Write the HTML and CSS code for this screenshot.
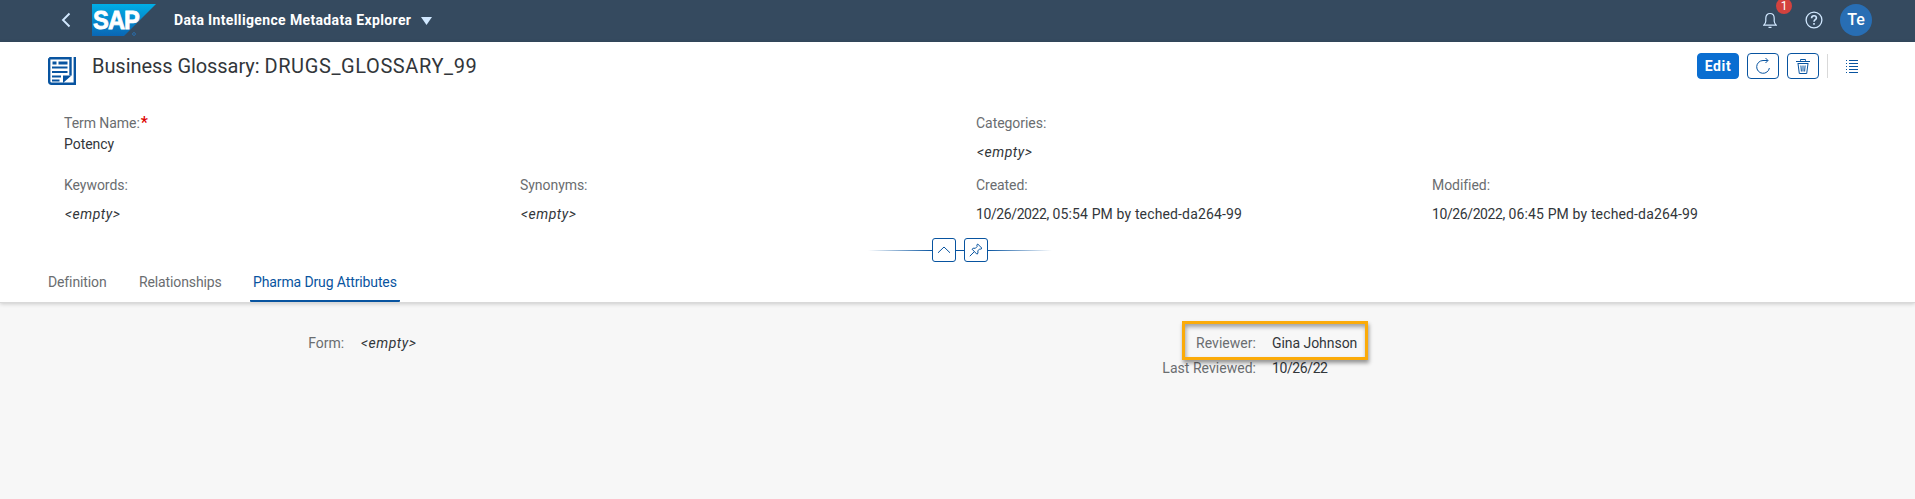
FILE: index.html
```html
<!DOCTYPE html>
<html lang="en">
<head>
<meta charset="utf-8">
<title>Data Intelligence Metadata Explorer</title>
<link rel="stylesheet" href="styles.css">
</head>
<body>
<header class="shell">
  <svg class="back" width="10" height="16" viewBox="0 0 10 16"><path d="M8.500 1.500 2 8l6.500 6.500"/></svg>
  <svg class="logo" width="64" height="32" viewBox="0 0 64 32">
    <defs><linearGradient id="sap" x1="0" y1="0" x2="0" y2="1"><stop offset="0" stop-color="#00aee6"/><stop offset="1" stop-color="#0a66b4"/></linearGradient></defs>
    <path fill="url(#sap)" d="M0 0h64L32 32H0z"/>
    <text class="logo-text" x="1" y="25" textLength="46" lengthAdjust="spacingAndGlyphs">SAP</text>
    <circle cx="42" cy="30" r="1.400" fill="none" stroke="#2b6ca8"/>
  </svg>
  <span class="app-name">Data Intelligence Metadata Explorer</span>
  <svg class="caret" width="11" height="8" viewBox="0 0 11 8"><path d="M0 0h11L5.500 8z"/></svg>
  <div class="shell-tools">
    <span class="bell">
      <svg width="14" height="17" viewBox="0 0 14 17"><path d="M.8 13.200h12.400c-1.400-1.300-2-2.200-2-4.200V6.200C11.200 3.300 9.500 1.500 7 1.500S2.800 3.300 2.800 6.200V9c0 2-.6 2.900-2 4.200zM5.500 15.300h3"/></svg>
      <span class="badge">1</span>
    </span>
    <svg class="help" width="18" height="18" viewBox="0 0 18 18"><circle cx="9" cy="9" r="7.900"/><path class="mark" d="M6.600 7.200C6.600 5.500 7.600 4.700 9 4.700s2.400.9 2.400 2.200C11.400 8.600 9 8.700 9 10.800M9 12.100v1.700"/></svg>
    <span class="avatar">Te</span>
  </div>
</header>

<section class="page-head">
  <div class="title-row">
    <svg class="doc" width="28" height="28" viewBox="0 0 28 28">
      <path class="line" d="M1.200 1.200H22.500V18.500M26.800 0V26.800H3.500Q1.200 26.800 1.200 24.500V1.200"/>
      <path class="fill" d="M4.500 4.500h4v3h-4zM10.500 4.500h9v3h-9zM4 9.500h15.500v2H4zM4 14h15.500v2H4zM4 18.500h9v2H4zM4 22.500h7.500v2H4zM15 26v-7.500H23.500z"/>
    </svg>
    <h1>Business Glossary: <span class="object-id">DRUGS_GLOSSARY_99</span></h1>
    <div class="actions">
      <button class="btn primary">Edit</button>
      <button class="btn"><svg width="16" height="16" viewBox="0 0 16 16"><path d="M12.800 2.500H8A6.400 6.400 0 1 0 14.400 10M10.500 0 13 2.500 10.500 5"/></svg></button>
      <button class="btn"><svg width="16" height="16" viewBox="0 0 16 16"><path d="M1 3.500h14M5.500 2.800V1.500h5v1.300M2.700 5.500h10.600M3 5.500l1.300 10h7.400l1.300-10M5.900 7.500l.5 6M8 7.500v6M10.100 7.500l-.5 6"/></svg></button>
      <span class="divider"></span>
      <svg class="list" width="14" height="14" viewBox="0 0 14 14"><path d="M4 1.500h9M4 4.500h9M4 7.500h9M4 10.500h9M4 13.500h9M1 1.500h1M1 4.500h1M1 7.500h1M1 10.500h1M1 13.500h1"/></svg>
    </div>
  </div>

  <div class="facts">
    <div class="fact tight wide"><span class="label">Term Name:<b class="req">*</b></span><span class="value">Potency</span></div>
    <div class="fact wide"><span class="label">Categories:</span><em class="value">&lt;empty&gt;</em></div>
    <div class="fact"><span class="label">Keywords:</span><em class="value">&lt;empty&gt;</em></div>
    <div class="fact"><span class="label">Synonyms:</span><em class="value">&lt;empty&gt;</em></div>
    <div class="fact"><span class="label">Created:</span><span class="value stamp"><span class="date">10/26/2022,</span> 05:54 PM by teched-da264-99</span></div>
    <div class="fact"><span class="label">Modified:</span><span class="value stamp"><span class="date">10/26/2022,</span> 06:45 PM by teched-da264-99</span></div>
  </div>

  <div class="snap">
    <span class="fade left"></span>
    <button class="mini"><svg width="14" height="14" viewBox="0 0 14 14"><path d="M1 9.800 7 4l6 5.800"/></svg></button>
    <span class="joint"></span>
    <button class="mini"><svg width="14" height="14" viewBox="0 0 14 14"><path d="M8.700 1 13 5.300l-1.200.9-1.100-.3-1.900 2 .2 2.300-1.100 1L3.100 6.200l1-1 2.300.1 1.800-1.900-.4-1.300zM5.200 8.800.8 13.200"/></svg></button>
    <span class="fade right"></span>
  </div>

  <nav class="tabs">
    <a class="tab">Definition</a>
    <a class="tab">Relationships</a>
    <a class="tab active">Pharma Drug Attributes</a>
  </nav>
</section>

<main class="attributes">
  <div class="attr-col">
    <span class="label">Form:</span><em class="value">&lt;empty&gt;</em>
  </div>
  <div class="attr-col second">
    <span class="label">Reviewer:</span><span class="value">Gina Johnson</span>
    <span class="label">Last Reviewed:</span><span class="value date">10/26/22</span>
    <span class="highlight"></span>
  </div>
</main>
</body>
</html>
```
FILE: styles.css
```css
* { box-sizing: border-box; }
body { margin: 0; height: 499px; display: flex; flex-direction: column; overflow: hidden; background: #f7f7f7; color: #32363a; font: 14px/20px Roboto, "Liberation Sans", sans-serif; letter-spacing: -.05px; }
svg { display: block; fill: none; flex: none; }
button { font: inherit; letter-spacing: inherit; }

.shell { height: 42px; flex: none; display: flex; align-items: center; padding: 0 42px 2px 61px; background: #354a5f; }
.back { stroke: #d1e8ff; stroke-width: 1.900; margin-right: 21px; }
.logo-text { font: bold 26px "Liberation Sans", sans-serif; fill: #fff; stroke: #fff; stroke-width: .8; letter-spacing: -1px; }
.app-name { margin-left: 18px; width: 237px; color: #fff; font-weight: 700; letter-spacing: .36px; white-space: nowrap; }
.caret { margin: 1px 0 0 10px; fill: #d1e8ff; }
.shell-tools { margin-left: auto; display: flex; align-items: center; }
.bell { position: relative; stroke: #d1e8ff; stroke-width: 1.200; margin-right: 28px; }
.badge { position: absolute; left: 13px; top: -14px; width: 16px; height: 16px; border-radius: 8px; background: #d3423e; color: #fff; font-size: 12px; line-height: 16px; text-align: center; stroke: none; }
.help { stroke: #d1e8ff; stroke-width: 1.300; margin-right: 17px; }
.mark { stroke-width: 1.600; }
.avatar { width: 32px; height: 32px; border-radius: 50%; background: #286eb4; color: #fff; font-size: 16px; font-weight: 500; line-height: 32px; text-align: center; margin-right: 1px; }

.page-head { height: 261px; flex: none; background: #fff; border-bottom: 1px solid #d9d9d9; box-shadow: 0 1px 4px rgba(0,0,0,.18); }
.title-row { height: 71px; display: flex; padding: 11px 56px 0 48px; }
.doc { margin-top: 4px; }
.doc .line { stroke: #0854a0; stroke-width: 2.400; }
.doc .fill { fill: #0854a0; }
h1 { margin: 0 0 0 16px; font-size: 20px; line-height: 26px; font-weight: 400; letter-spacing: -.06px; white-space: nowrap; }
.object-id { letter-spacing: .61px; }
.actions { margin-left: auto; height: 26px; display: flex; align-items: center; gap: 8px; }
.btn { width: 32px; height: 26px; padding: 0; display: flex; align-items: center; justify-content: center; border: 1px solid #0854a0; border-radius: 4px; background: #fff; }
.btn svg, .mini svg, .list { stroke: #0854a0; stroke-width: 1; }
.btn.primary { width: 42px; background: #0a6ed1; border-color: #0a6ed1; color: #fff; font-weight: 700; letter-spacing: .6px; }
.divider { width: 1px; height: 24px; background: #d9d9d9; }
.list { margin-left: 9px; }

.facts { height: 125px; padding-left: 64px; display: grid; grid-template-columns: repeat(4, 456px); grid-template-rows: 62px 62px; }
.fact { display: flex; flex-direction: column; gap: 9px; white-space: nowrap; }
.fact.tight { gap: 1px; }
.fact.wide { grid-column: span 2; }
.label { color: #6a6d70; }
em.value { letter-spacing: .55px; padding-left: 1px; }
.stamp { letter-spacing: .14px; }
.date { letter-spacing: -.4px; }
.req { color: #d00; font-size: 16px; line-height: 0; margin-left: 1px; font-weight: 500; }

.snap { height: 24px; display: flex; align-items: center; justify-content: center; padding-left: 4px; }
.mini { width: 24px; height: 24px; padding: 0; display: flex; align-items: center; justify-content: center; border: 1px solid #0854a0; border-radius: 3px; background: #fff; }
.joint { width: 8px; height: 1px; background: #0854a0; }
.fade { width: 64px; height: 1px; }
.left { background: linear-gradient(to left, #0854a0, transparent); }
.right { background: linear-gradient(to right, #0854a0, transparent); }

.tabs { height: 40px; padding-left: 45px; display: grid; grid-template-columns: 91px 114px 150px; letter-spacing: -.12px; }
.tab { height: 40px; padding: 10px 3px 0; color: #6a6d70; white-space: nowrap; }
.tab.active { color: #0854a0; border-bottom: 2px solid #0854a0; border-radius: 0 0 1px 1px; }

.attributes { padding-top: 30px; display: grid; grid-template-columns: 957px 958px; }
.attr-col { display: grid; grid-template-columns: 344px 1fr; grid-auto-rows: 20px; row-gap: 5px; column-gap: 16px; white-space: nowrap; align-content: start; }
.attr-col .label { text-align: right; }
.second { position: relative; grid-template-columns: 299px 1fr; }
.second .label { letter-spacing: .03px; }
.highlight { position: absolute; left: 225px; top: -12px; width: 186px; height: 39px; border: 3px solid #fbab09; box-shadow: 1px 3px 4px rgba(0,0,0,.4), inset 1px 3px 4px rgba(0,0,0,.35); }
```
